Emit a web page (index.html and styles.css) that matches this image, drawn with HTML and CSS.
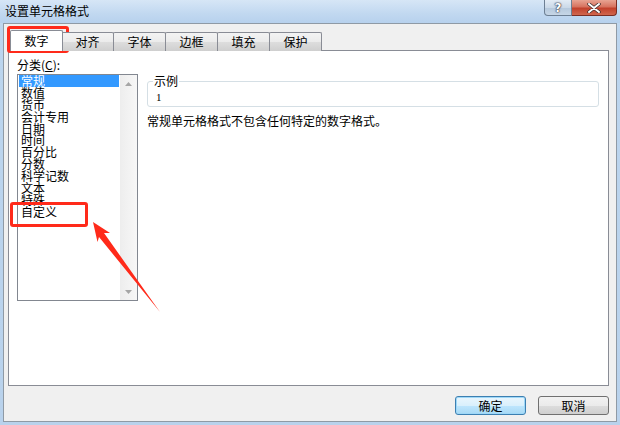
FILE: index.html
```html
<!DOCTYPE html>
<html lang="zh-CN">
<head>
<meta charset="utf-8">
<title>设置单元格格式</title>
<link rel="stylesheet" href="styles.css">
</head>
<body>
<div class="window">
  <div class="titlebar">
    <span class="title">设置单元格格式</span>
    <div class="caption-btns">
      <div class="cbtn help">?</div>
      <div class="cbtn close">
        <svg width="14" height="10" viewBox="0 0 14 10"><path d="M2 1 L12 9 M12 1 L2 9" stroke="#3a2a2a" stroke-width="3.4" stroke-linecap="round"/><path d="M2 1 L12 9 M12 1 L2 9" stroke="#ffffff" stroke-width="2" stroke-linecap="round"/></svg>
      </div>
    </div>
  </div>
  <div class="dialog">
    <div class="tabs">
      <div class="tab active">数字</div>
      <div class="tab">对齐</div>
      <div class="tab">字体</div>
      <div class="tab">边框</div>
      <div class="tab">填充</div>
      <div class="tab">保护</div>
    </div>
    <div class="panel">
      <div class="left">
        <div class="label">分类(<u>C</u>):</div>
        <div class="listbox">
          <div class="items">
            <div class="item selected">常规</div>
            <div class="item">数值</div>
            <div class="item">货币</div>
            <div class="item">会计专用</div>
            <div class="item">日期</div>
            <div class="item">时间</div>
            <div class="item">百分比</div>
            <div class="item">分数</div>
            <div class="item">科学记数</div>
            <div class="item">文本</div>
            <div class="item">特殊</div>
            <div class="item">自定义</div>
          </div>
          <div class="scrollbar">
            <div class="sbtn"><svg width="7" height="4" viewBox="0 0 7 4"><path d="M0 4 L3.5 0 L7 4 Z" fill="#a6a6a6"/></svg></div>
            <div class="track"></div>
            <div class="sbtn"><svg width="7" height="4" viewBox="0 0 7 4"><path d="M0 0 L3.5 4 L7 0 Z" fill="#a6a6a6"/></svg></div>
          </div>
        </div>
      </div>
      <div class="right">
        <fieldset class="sample">
          <legend>示例</legend>
          <div class="sample-value">1</div>
        </fieldset>
        <div class="desc">常规单元格格式不包含任何特定的数字格式。</div>
      </div>
    </div>
    <div class="buttons">
      <div class="btn default">确定</div>
      <div class="btn">取消</div>
    </div>
  </div>
  <div class="mark mark-tab"></div>
  <div class="mark mark-item"></div>
  <svg class="arrow" width="620" height="425" viewBox="0 0 620 425">
    <polygon points="93,222 110,233 104,233 160,312 99,237 97.5,242" fill="#ff2a1a"/>
  </svg>
</div>
</body>
</html>
```

FILE: styles.css
```css
* { box-sizing: border-box; }
html, body { margin: 0; padding: 0; }
body {
  width: 620px;
  height: 425px;
  overflow: hidden;
  font-family: "Noto Sans CJK SC", "Liberation Sans", sans-serif;
  font-size: 12px;
  color: #000;
}
.window {
  position: relative;
  width: 620px;
  height: 425px;
  display: flex;
  flex-direction: column;
  background: linear-gradient(to bottom, #cfe1f4 0px, #bcd5ee 30px, #b9d2ec 425px);
}
.titlebar {
  height: 23px;
  display: flex;
  align-items: flex-start;
  padding-left: 5px;
  background: linear-gradient(to bottom, #d6e6f6 0%, #c1d8f0 60%, #b7d1ed 100%);
}
.title {
  line-height: 22px;
  font-size: 12px;
  color: #000;
}
.caption-btns {
  margin-left: auto;
  margin-right: 3px;
  display: flex;
}
.cbtn {
  height: 16px;
  display: flex;
  align-items: center;
  justify-content: center;
  border: 1px solid #6d7f93;
  border-top: none;
}
.help {
  width: 28px;
  border-radius: 0 0 0 4px;
  background: linear-gradient(to bottom, #e3ecf5 0%, #cbd9e8 50%, #b5c8dc 51%, #c6d6e6 100%);
  color: #fff;
  font-family: "DejaVu Sans", sans-serif;
  font-weight: bold;
  font-size: 12px;
  text-shadow: 0 0 1px #334, 0 0 1px #334, 0 0 2px #334;
  line-height: 14px;
}
.close {
  width: 45px;
  border-left: none;
  border-color: #7a2e24;
  border-radius: 0 0 4px 0;
  background: linear-gradient(to bottom, #e8a493 0%, #d7735f 45%, #c2412c 55%, #d0664e 100%);
}
.dialog {
  flex: 1;
  margin: 0 3px 3px 3px;
  background: #f0f0f0;
  border: 1px solid #8f9aa5;
  display: flex;
  flex-direction: column;
}
.tabs {
  display: flex;
  align-items: flex-end;
  height: 27px;
  padding-left: 6px;
  margin-bottom: -1px;
  position: relative;
  z-index: 1;
}
.tab {
  width: 53px;
  height: 19px;
  margin-left: -1px;
  border: 1px solid #898c95;
  border-bottom: none;
  border-radius: 2px 2px 0 0;
  background: linear-gradient(to bottom, #f3f3f3 0%, #ebebeb 50%, #dddddd 51%, #cfcfcf 100%);
  text-align: center;
  line-height: 17px;
  font-size: 12px;
}
.tab.active {
  margin-left: 0;
  height: 21px;
  background: #ffffff;
  position: relative;
  z-index: 2;
  line-height: 19px;
  margin-right: -1px;
}
.panel {
  height: 336px;
  margin: 0 7px 0 4px;
  background: #ffffff;
  border: 1px solid #898c95;
  display: flex;
  padding: 7px 8px 0 8px;
}
.left {
  width: 121px;
  display: flex;
  flex-direction: column;
}
.label {
  height: 16px;
  line-height: 14px;
}
.label u { text-decoration: underline; }
.listbox {
  width: 121px;
  height: 227px;
  border: 1px solid #828790;
  display: flex;
  background: #fff;
}
.items {
  width: 102px;
  padding: 0 1px;
}
.item {
  height: 11.9px;
  line-height: 12px;
  padding-left: 2px;
  white-space: nowrap;
}
.item.selected {
  background: #3399ff;
  color: #fff;
}
.scrollbar {
  width: 17px;
  display: flex;
  flex-direction: column;
  background: linear-gradient(to right, #ededed, #f7f7f7);
}
.sbtn {
  height: 17px;
  display: flex;
  align-items: center;
  justify-content: center;
}
.track { flex: 1; }
.right {
  flex: 1;
  padding-left: 9px;
  padding-right: 1px;
  padding-top: 16px;
}
.sample {
  margin: 0;
  padding: 2px 6px 0 8px;
  height: 33px;
  border: 1px solid #d5dfe5;
  border-radius: 3px;
}
.sample legend {
  padding: 0 1px;
  margin-left: -3px;
  line-height: 14px;
  font-size: 12px;
}
.sample-value {
  font-family: "Liberation Serif", serif;
  font-size: 11px;
  line-height: 14px;
}
.desc {
  margin-top: 7px;
  line-height: 14px;
  white-space: nowrap;
}
.buttons {
  display: flex;
  justify-content: flex-end;
  gap: 12px;
  padding: 10px 7px 0 0;
}
.btn {
  width: 71px;
  height: 19px;
  border: 1px solid #707070;
  border-radius: 3px;
  background: linear-gradient(to bottom, #f2f2f2 0%, #ebebeb 50%, #dddddd 51%, #cfcfcf 100%);
  text-align: center;
  line-height: 17px;
  font-size: 12px;
}
.btn.default {
  border-color: #3c7fb1;
  background: linear-gradient(to bottom, #eaf6fd 0%, #d9f0fc 50%, #bee6fd 51%, #a7d9f5 100%);
  box-shadow: inset 0 0 0 1px #9ed8f8;
}
.mark {
  position: absolute;
  border: 3px solid #ff2a1a;
  border-radius: 3px;
}
.mark-tab {
  left: 7px;
  top: 26px;
  width: 62px;
  height: 27px;
}
.mark-item {
  left: 10px;
  top: 202px;
  width: 78px;
  height: 25px;
}
.arrow {
  position: absolute;
  left: 0;
  top: 0;
  pointer-events: none;
}
```
